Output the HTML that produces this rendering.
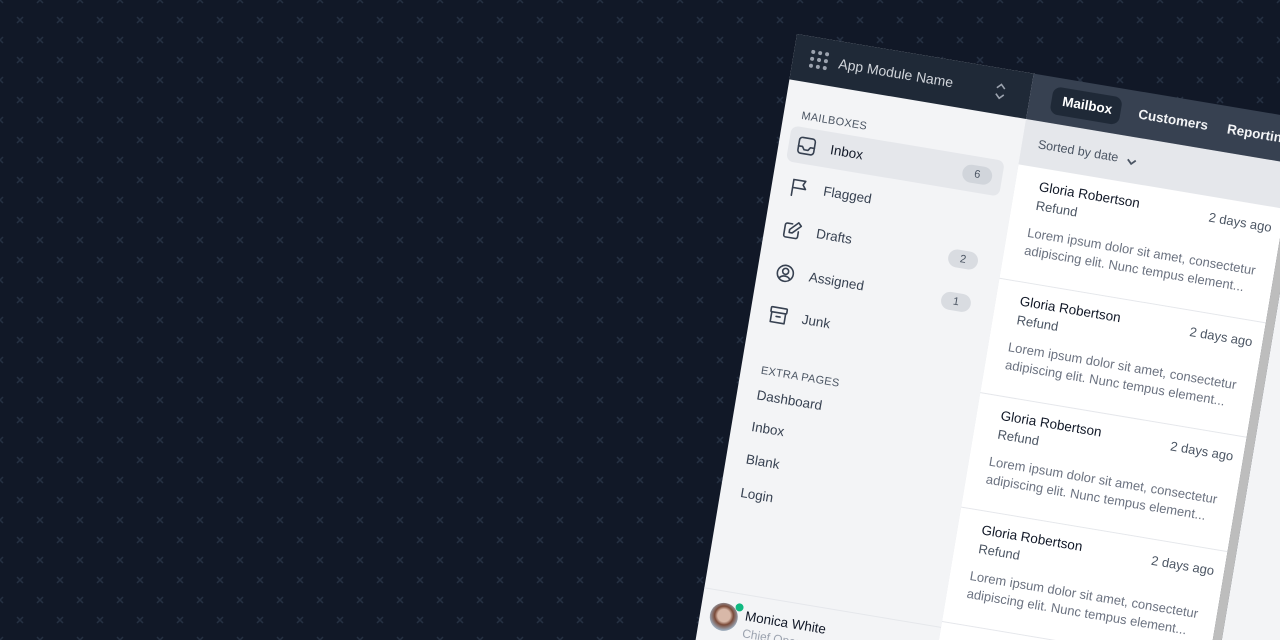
<!DOCTYPE html>
<html><head><meta charset="utf-8"><style>
html,body{margin:0;padding:0;width:1280px;height:640px;overflow:hidden;background:#111827;font-family:"Liberation Sans",sans-serif}
#wrap{position:relative;width:1280px;height:640px;overflow:hidden;background:#111827}
#pat{position:absolute;left:0;top:0}
.panel{position:absolute;left:797px;top:34px;width:760px;height:660px;transform-origin:0 0;transform:rotate(9.5deg);}
.side{position:absolute;left:0;top:0;width:240px;height:660px;background:#f3f4f6;border-right:1px solid #e5e7eb}
.shead{position:absolute;left:0;top:0;width:240px;height:46px;background:#1f2937;color:#d1d5db;font-size:14px}
.tnav{position:absolute;left:240px;top:0;width:520px;height:46px;background:#374151}
.a{position:absolute;white-space:nowrap}
.nav{font-size:13.5px;color:#374151}
.badge{position:absolute;width:30px;height:18px;border-radius:9px;background:#d9dce1;font-size:11px;color:#4b5563;text-align:center;line-height:18px}
.list{position:absolute;left:240px;top:46px;width:270px;height:614px;background:#e5e7eb}
.item{position:absolute;left:0;width:270px;height:115px;background:#fff;border-bottom:1px solid #e5e7eb}
.nm{font-size:13.5px;color:#111827;left:24px;top:11px}
.rf{font-size:13px;color:#4b5563;left:24px;top:30px}
.tm{font-size:13px;color:#4b5563;right:10px;top:13px}
.lo{font-size:13px;color:#6b7280;left:20px;top:57px;line-height:18px;white-space:normal;width:250px}
svg.ic{position:absolute;fill:none;stroke:#374151;stroke-width:1.6;stroke-linecap:round;stroke-linejoin:round}
</style></head><body><div id="wrap">
<svg id="pat" width="1280" height="640">
<defs><pattern id="p" width="40" height="40" patternUnits="userSpaceOnUse">
<g stroke="#253042" stroke-width="1.5"><path d="M-3,-3 3,3 M3,-3 -3,3"/><path d="M37,-3 43,3 M43,-3 37,3"/><path d="M-3,37 3,43 M3,37 -3,43"/><path d="M37,37 43,43 M43,37 37,43"/><path d="M17,17 23,23 M23,17 17,23"/></g>
</pattern></defs>
<rect width="1280" height="640" fill="url(#p)"/></svg>
<div class="panel">
 <div class="side">
  <div class="shead">
   <svg style="position:absolute;left:16px;top:12px" width="22" height="20"><g fill="#9ca3af"><circle cx="3" cy="3" r="2"/><circle cx="10" cy="3" r="2"/><circle cx="17" cy="3" r="2"/><circle cx="3" cy="10" r="2"/><circle cx="10" cy="10" r="2"/><circle cx="17" cy="10" r="2"/><circle cx="3" cy="17" r="2"/><circle cx="10" cy="17" r="2"/><circle cx="17" cy="17" r="2"/></g></svg>
   <span class="a" style="left:46px;top:14px">App Module Name</span>
   <svg style="position:absolute;left:204px;top:14px" width="12" height="18"><path d="M2,6 6,2 10,6 M2,12 6,16 10,12" stroke="#9ca3af" stroke-width="1.6" fill="none"/></svg>
  </div>
  <span class="a" style="left:18px;top:74px;font-size:11px;color:#4b5563;letter-spacing:.3px">MAILBOXES</span>
  <div style="position:absolute;left:10px;top:91px;width:216px;height:36px;border-radius:7px;background:#e5e7eb"></div>
  <svg class="ic" style="left:18px;top:99px" width="20" height="20"><rect x="2" y="2" width="16" height="16" rx="3"/><path d="M2,11h4l2,3h4l2-3h4"/></svg>
  <span class="a nav" style="left:52px;top:101px;color:#111827">Inbox</span>
  <span class="badge" style="left:186px;top:100px;background:#d1d5db">6</span>
  <svg class="ic" style="left:18px;top:141px" width="20" height="20"><path d="M3,19V3h12l-2,4 3,4H3"/></svg>
  <span class="a nav" style="left:52px;top:143px">Flagged</span>
  <svg class="ic" style="left:18px;top:184px" width="20" height="20"><path d="M9,4H4a2,2 0 0 0-2,2v10a2,2 0 0 0 2,2h10a2,2 0 0 0 2-2v-5"/><path d="M15,2l3,3-8,8H7v-3z"/></svg>
  <span class="a nav" style="left:52px;top:186px">Drafts</span>
  <span class="badge" style="left:186px;top:186px">2</span>
  <svg class="ic" style="left:18px;top:228px" width="20" height="20"><circle cx="10" cy="10" r="8"/><circle cx="10" cy="8" r="3"/><path d="M5,15c2-3 8-3 10,0"/></svg>
  <span class="a nav" style="left:52px;top:230px">Assigned</span>
  <span class="badge" style="left:186px;top:229px">1</span>
  <svg class="ic" style="left:18px;top:271px" width="20" height="20"><rect x="2" y="2" width="16" height="5" rx="1"/><path d="M3,7v10h14V7M8,11h4"/></svg>
  <span class="a nav" style="left:52px;top:273px">Junk</span>
  <span class="a" style="left:20px;top:332px;font-size:11px;color:#4b5563;letter-spacing:.3px">EXTRA PAGES</span>
  <span class="a nav" style="left:20px;top:355px">Dashboard</span>
  <span class="a nav" style="left:20px;top:387px">Inbox</span>
  <span class="a nav" style="left:20px;top:420px">Blank</span>
  <span class="a nav" style="left:20px;top:454px">Login</span>
  <div style="position:absolute;left:0;top:561px;width:240px;border-top:1px solid #e5e7eb"></div>
  <div style="position:absolute;left:10px;top:573px;width:28px;height:28px;border-radius:50%;background:radial-gradient(circle at 50% 45%,#d8b8a8 0 30%,#7a4a38 45%,#9aa8b8 70%)"></div>
  <div style="position:absolute;left:34px;top:571px;width:8px;height:8px;border-radius:50%;background:#10b981"></div>
  <span class="a" style="left:45px;top:575px;font-size:13.5px;color:#111827">Monica White</span>
  <span class="a" style="left:45px;top:593px;font-size:12px;color:#9ca3af">Chief Operations</span>
 </div>
 <div class="tnav">
  <div style="position:absolute;left:22px;top:9px;width:70px;height:28px;border-radius:8px;background:#1f2937"></div>
  <span class="a" style="left:33px;top:15px;font-size:13.5px;color:#fff;font-weight:bold">Mailbox</span>
  <span class="a" style="left:110px;top:15px;font-size:13.5px;color:#f3f4f6;font-weight:bold">Customers</span>
  <span class="a" style="left:200px;top:15px;font-size:13.5px;color:#f3f4f6;font-weight:bold">Reporting</span>
 </div>
 <div class="list">
  <span class="a" style="left:16px;top:16px;font-size:12.5px;color:#4b5563">Sorted by date</span>
  <svg style="position:absolute;left:105px;top:20px" width="12" height="10"><path d="M2,3 6,7 10,3" stroke="#4b5563" stroke-width="1.8" fill="none"/></svg>
  <div class="item" style="top:46px"><span class="a nm">Gloria Robertson</span><span class="a rf">Refund</span><span class="a tm">2 days ago</span><span class="a lo">Lorem ipsum dolor sit amet, consectetur adipiscing elit. Nunc tempus element...</span></div>
  <div class="item" style="top:162px"><span class="a nm">Gloria Robertson</span><span class="a rf">Refund</span><span class="a tm">2 days ago</span><span class="a lo">Lorem ipsum dolor sit amet, consectetur adipiscing elit. Nunc tempus element...</span></div>
  <div class="item" style="top:278px"><span class="a nm">Gloria Robertson</span><span class="a rf">Refund</span><span class="a tm">2 days ago</span><span class="a lo">Lorem ipsum dolor sit amet, consectetur adipiscing elit. Nunc tempus element...</span></div>
  <div class="item" style="top:394px"><span class="a nm">Gloria Robertson</span><span class="a rf">Refund</span><span class="a tm">2 days ago</span><span class="a lo">Lorem ipsum dolor sit amet, consectetur adipiscing elit. Nunc tempus element...</span></div>
  <div class="item" style="top:510px"><span class="a nm">Gloria Robertson</span><span class="a rf">Refund</span><span class="a tm">2 days ago</span><span class="a lo">Lorem ipsum dolor sit amet, consectetur adipiscing elit. Nunc tempus element...</span></div>
 </div>
 <div style="position:absolute;left:510px;top:46px;width:9px;height:614px;background:#bdbdbd"></div>
 <div style="position:absolute;left:519px;top:46px;width:241px;height:614px;background:#f3f4f6"></div>
</div>
</div></body></html>
